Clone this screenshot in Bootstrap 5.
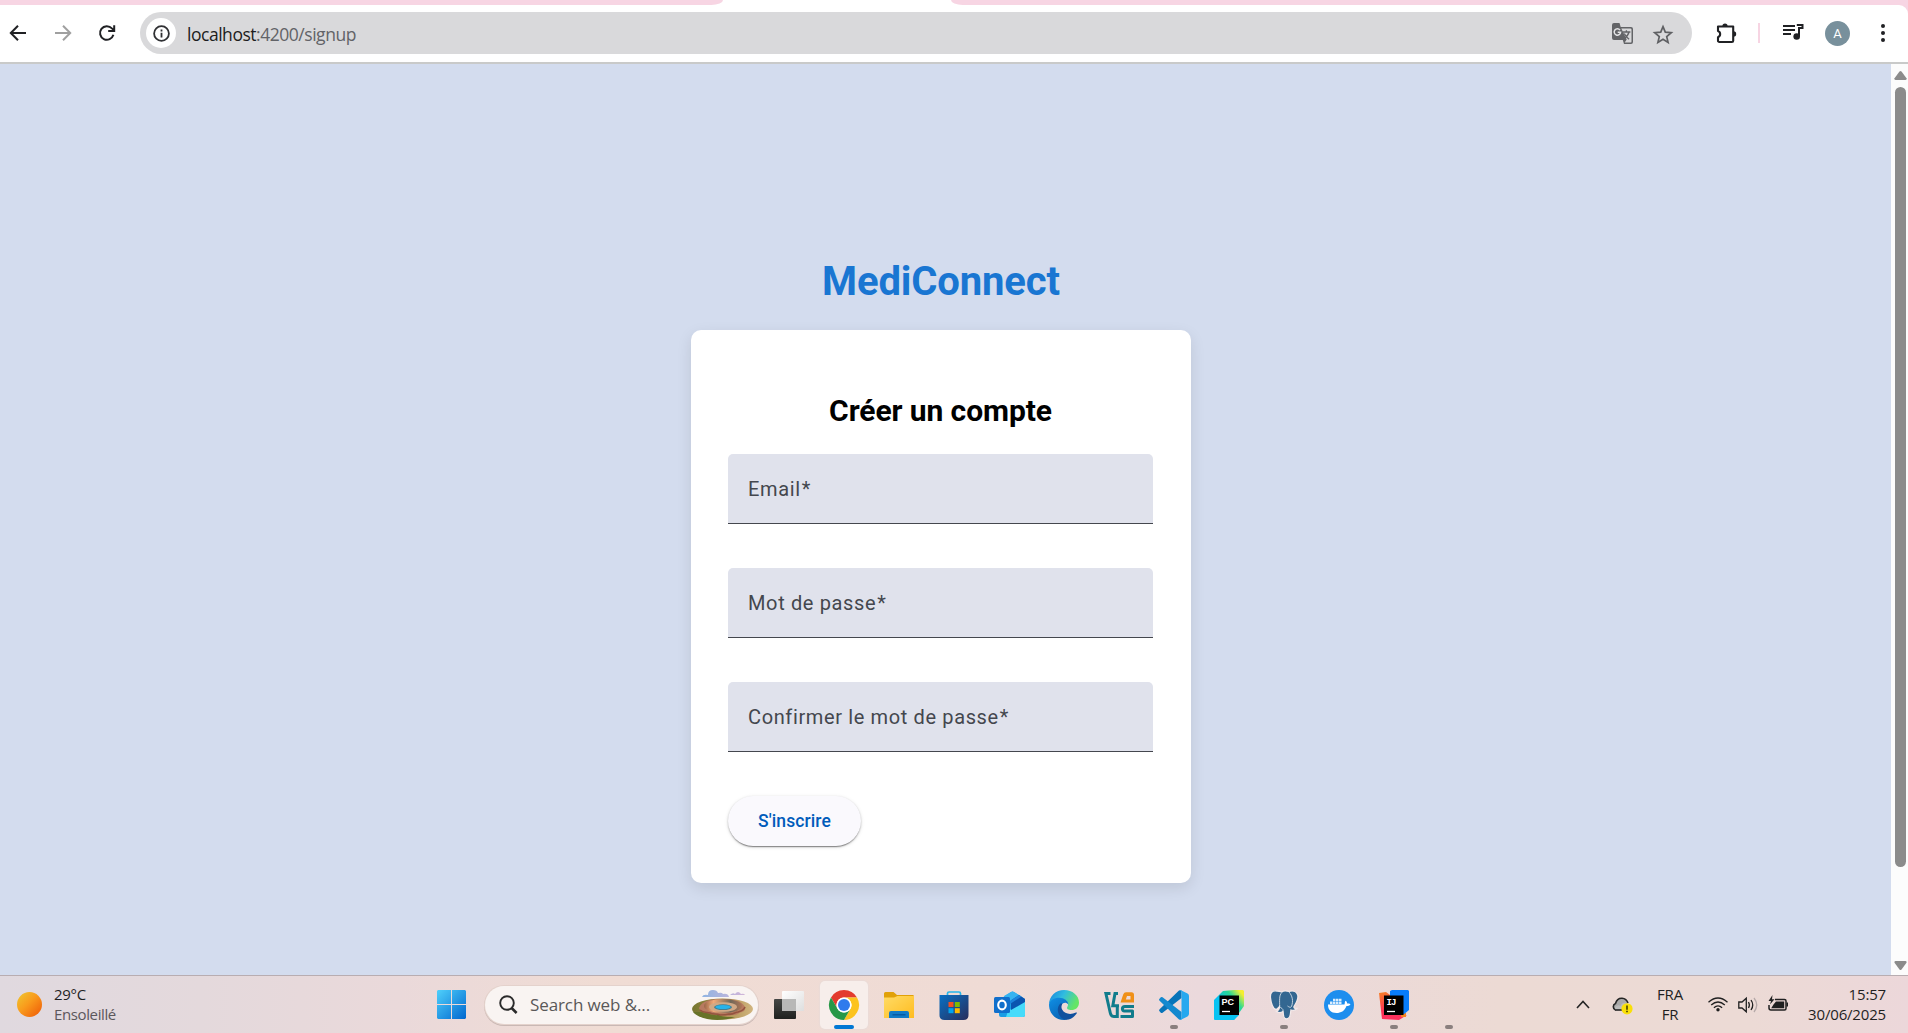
<!DOCTYPE html>
<html lang="fr">
<head>
<meta charset="utf-8">
<meta name="viewport" content="width=device-width, initial-scale=1">
<title>MediConnect</title>
<link href="https://cdn.jsdelivr.net/npm/bootstrap@5.3.0/dist/css/bootstrap.min.css" rel="stylesheet">
<style>
  body { font-family: "Open Sans", "Noto Sans", sans-serif; height: 1033px; color: #1f1f1f; }
  svg { display: block; flex: none; overflow: visible; }
  .tabstrip { height: 5px; background: #fff; }
  .strip-left { width: 723px; background: #f7d5e3; border-bottom-right-radius: 14px 6px; }
  .strip-right { width: 957px; background: #f7d5e3; border-bottom-left-radius: 14px 6px; }
  .toolbar { height: 59px; border-bottom: 2px solid #c9cac9; padding: 0 0 1px 9px; background: #fff; border-top-right-radius: 9px; }
  .toolbar-corner { background: #f7d5e3; }
  .omnibox { width: 1552px; height: 42px; background: #d9d9db; border-radius: 21px; margin-left: 24px; padding: 0 19px 0 6px; }
  .site-info { width: 30px; height: 30px; background: #fff; }
  .url-text { font-size: 17.5px; letter-spacing: -.47px; margin: 2px 0 0 11px; color: #626367; line-height: 24px; }
  .url-text b { font-weight: 400; color: #1d1d20; }
  .toolbar-sep { width: 2px; height: 20px; background: #f7d5e3; }
  .profile { width: 25px; height: 25px; background: #78909c; color: #fff; font: 13px/25px Roboto, sans-serif; }
  .viewport { height: 911px; background: #d3dcee; }
  .signup { padding-top: 193px; padding-right: 9px; font-family: Roboto, sans-serif; }
  .brand { font-size: 40px; font-weight: 700; line-height: 50px; letter-spacing: -.12px; color: #1976d2; margin: 0 0 23px; }
  .signup-card { width: 500px; height: 553px; background: #fff; border-radius: 10px; padding: 62px 38px 0 37px; box-shadow: 0 5px 15px rgba(0,0,0,.1); }
  .signup-card h2 { font-size: 30px; font-weight: 700; line-height: 38px; letter-spacing: -.08px; color: #000; margin: 0 0 24px; }
  .field { height: 70px; background: #e0e2ec; border-bottom: 1px solid #44474e; border-radius: 5px 5px 0 0; padding: 0 20px; margin-bottom: 44px; font-size: 20px; letter-spacing: .63px; color: #44474e; }
  .field span { margin-left: 1px; }
  .btn-signup { width: 133px; height: 50px; border-radius: 25px; background: #faf9fd; color: #005cbb; font: 500 17.5px/24px Roboto, sans-serif; letter-spacing: .1px; padding: 0; box-shadow: 0 2px 1px -1px rgba(0,0,0,.3), 0 1px 2px rgba(0,0,0,.24), 0 1px 4px rgba(0,0,0,.1); }
  .scroll-track { width: 17px; background: #fcfcfc; padding: 7px 2px 5px 3px; }
  .scroll-thumb { width: 11px; height: 780px; border-radius: 6px; background: #8b8b8b; margin-top: 7px; }
  .taskbar { height: 58px; border-top: 1px solid #b8adb1; background: linear-gradient(90deg, #e0d9df 0, #e4d9dc 200px, #ead9da 400px, #f0dcd4 600px, #efdbd5 1000px, #ebd9dc 1200px, #ecdad4 1500px, #ecdad5 1750px, #ecd7da 1908px); font-size: 15px; line-height: 20px; }
  .weather { width: 437px; padding-left: 17px; }
  .sun { width: 25px; height: 25px; background: linear-gradient(135deg, #efc42f 5%, #f99b1c 45%, #ef5d08 95%); }
  .weather-text { margin: -2px 0 0 12px; letter-spacing: -.3px; }
  .weather-text div + div { color: #5b575b; letter-spacing: -.38px; }
  .searchbox { width: 273px; height: 38px; margin-left: 19px; border-radius: 19px; background: #f9f4f2; box-shadow: 0 0 0 1px #e4d2cc, 0 1px 0 1px #c9b8b4; padding: 0 5px 0 14px; color: #5a5858; font-size: 17px; }
  .search-label { margin: 1px 0 0 12px; letter-spacing: -.1px; }
  .apps { margin-left: 7px; gap: 7px; }
  .app { width: 48px; height: 48px; position: relative; }
  .app.current { background: #f7eeeb; border-radius: 5px; box-shadow: 0 0 1px 1px #eadbd7; }
  .mark-run { position: absolute; bottom: 0; left: 20px; width: 8px; height: 4px; border-radius: 2px; background: #8a7f7e; }
  .current .mark-run { left: 14px; width: 20px; background: #0078d4; }
  .tray { margin-left: 103px; }
  .clock { width: 92px; margin: -2px 0 0 5px; letter-spacing: -.17px; }
  .lang { width: 40px; margin: -1px 0 0 17px; letter-spacing: -.2px; }
</style>
<script src="https://cdn.jsdelivr.net/npm/bootstrap@5.3.0/dist/js/bootstrap.bundle.min.js"></script>
</head>
<body class="d-flex flex-column overflow-hidden">

<div class="tabstrip d-flex justify-content-between"><div class="strip-left"></div><div class="strip-right"></div></div>
<div class="toolbar-corner">
<header class="toolbar d-flex align-items-center">
  <svg width="18" height="18" fill="none" stroke="#202124" stroke-width="2"><path d="M17 9H2M9 1.8 1.8 9 9 16.2"/></svg>
  <svg width="18" height="18" style="margin-left:27px" fill="none" stroke="#a0a0a0" stroke-width="2"><path d="M1 9h15M9 1.8 16.2 9 9 16.2"/></svg>
  <svg width="18" height="18" style="margin-left:26px" fill="none" stroke="#202124" stroke-width="2"><path d="M15.4 10.8A6.8 6.8 0 1 1 13.9 4.4L16 6.400M16.2 1.200V7H10.200"/></svg>
  <div class="omnibox d-flex align-items-center">
    <div class="site-info rounded-circle d-flex align-items-center justify-content-center">
      <svg width="17" height="17" fill="none" stroke="#303134" stroke-width="1.8"><circle cx="8.5" cy="8.5" r="7.4"/><path d="M8.5 7.7v4.8M8.5 4.4v2"/></svg>
    </div>
    <div class="url-text"><b>localhost</b>:4200/signup</div>
    <svg class="ms-auto" width="21" height="21" viewBox="0 0 21 21" style="margin-top:1px"><path d="M2 0h5.5l1.2 4H19a2 2 0 0 1 2 2v13a2 2 0 0 1-2 2h-7l-1.2-4H2a2 2 0 0 1-2-2V2a2 2 0 0 1 2-2z" fill="#636467"/><path d="M9.3 5.4H18.3a1.2 1.2 0 0 1 1.2 1.2v11.8a1.2 1.2 0 0 1-1.2 1.2h-5.6l2-3z" fill="#d9d9db"/><path d="M10.6 9h7.8M14.4 7.2V9M17 9c-.7 3-2.7 5.2-5 6.8M12.3 10.5c1 2.6 2.6 4.2 4.8 5.8" fill="none" stroke="#636467" stroke-width="1.3"/><path d="M8 7.1A3.2 3.2 0 1 0 8.6 9.2H5.7" fill="none" stroke="#e4e4e6" stroke-width="1.5"/></svg>
    <svg width="20" height="20" viewBox="0 0 20 20" style="margin-left:20px;margin-top:3px" fill="none" stroke="#5f6063" stroke-width="1.7"><path d="m10 1.7 2.3 5.5 6 .5-4.6 3.9 1.4 5.8-5.1-3.1-5.1 3.1 1.4-5.8-4.6-3.9 6-.5z"/></svg>
  </div>
  <svg width="21" height="21" viewBox="0 0 21 21" style="margin-left:24px"><path d="M2 3.5h15.2v14.2a1.3 1.3 0 0 1-1.3 1.3H3.3A1.3 1.3 0 0 1 2 17.700v-3.500a3.300 3.300 0 0 0 0-6.200z" fill="none" stroke="#202124" stroke-width="2.100" stroke-linejoin="round"/><path d="M6.400 3a2.600 2.600 0 0 1 5.200 0zM17.600 8.300a2.600 2.600 0 0 1 0 5.200z" fill="#202124"/></svg>
  <div class="toolbar-sep" style="margin-left:21px"></div>
  <svg width="20" height="16" viewBox="0 0 20 16" style="margin-left:23px;margin-top:-3px"><path d="M0 2h12M0 6h12M0 10h8" stroke="#202124" stroke-width="2"/><path d="M13.800 1H19.500v3h-3.500v8.200" fill="none" stroke="#202124" stroke-width="2"/><circle cx="13.700" cy="12.500" r="3.300" fill="#202124"/></svg>
  <div class="profile rounded-circle text-center" style="margin-left:22px">A</div>
  <svg width="6" height="20" style="margin-left:30px" fill="#202124"><circle cx="3" cy="3" r="2"/><circle cx="3" cy="10" r="2"/><circle cx="3" cy="17" r="2"/></svg>
</header>
</div>

<main class="viewport d-flex">
  <section class="signup flex-grow-1 d-flex flex-column align-items-center">
    <h1 class="brand">MediConnect</h1>
    <form class="signup-card">
      <h2 class="text-center">Créer un compte</h2>
      <div class="field d-flex align-items-center">Email<span>*</span></div>
      <div class="field d-flex align-items-center">Mot de passe<span>*</span></div>
      <div class="field d-flex align-items-center">Confirmer le mot de passe<span>*</span></div>
      <button type="button" class="btn-signup btn border-0">S'inscrire</button>
    </form>
  </section>
  <aside class="scroll-track d-flex flex-column align-items-center">
    <svg width="13" height="9" fill="#8b8b8b"><path d="M5.500.6Q6.500-.4 7.500.6L12.500 7.300Q13 9 11.500 9H1.500Q0 9 .5 7.300z"/></svg>
    <div class="scroll-thumb"></div>
    <svg class="mt-auto" width="13" height="9" fill="#8b8b8b"><path d="M5.500 8.400Q6.500 9.400 7.500 8.400L12.500 1.700Q13 0 11.500 0H1.500Q0 0 .5 1.700z"/></svg>
  </aside>
</main>

<footer class="taskbar d-flex align-items-center">
  <div class="weather d-flex align-items-center">
    <div class="sun rounded-circle"></div>
    <div class="weather-text"><div>29°C</div><div>Ensoleillé</div></div>
  </div>
  <svg width="29" height="29" viewBox="0 0 29 29"><defs><linearGradient id="win" gradientUnits="userSpaceOnUse" x1="0" y1="0" x2="29" y2="29"><stop stop-color="#4fd0fb"/><stop offset="1" stop-color="#0067cf"/></linearGradient></defs><path fill="url(#win)" d="M1 0h13v14H0V1zM15 0h13l1 1v13H15zM0 15h14v14H1l-1-1zM15 15h14v13l-1 1H15z"/></svg>
  <div class="searchbox d-flex align-items-center">
    <svg width="19" height="19" viewBox="0 0 19 19" fill="none" stroke="#2a2a2a"><circle cx="8" cy="8" r="6.800" stroke-width="1.900"/><path d="m12.600 13 5 5" stroke-width="2.500"/></svg>
    <span class="search-label">Search web &amp;...</span>
    <svg class="ms-auto" width="61" height="30" viewBox="0 0 61 30">
      <defs><linearGradient id="land"><stop stop-color="#75752e"/><stop offset=".5" stop-color="#a98c4d"/><stop offset="1" stop-color="#d1b57f"/></linearGradient><linearGradient id="sky"><stop stop-color="#90b4e2"/><stop offset="1" stop-color="#d2b5d8"/></linearGradient><linearGradient id="rim"><stop stop-color="#9b6648"/><stop offset=".25" stop-color="#f2aa79"/><stop offset=".7" stop-color="#706858"/><stop offset="1" stop-color="#ad7656"/></linearGradient></defs>
      <ellipse cx="30.500" cy="19" rx="30.500" ry="10.500" fill="url(#land)"/>
      <path d="M1 22c8 9 29 10 42 5-9 0-12 0-16-2-8 1-12-3-18-3z" fill="#687329"/>
      <path d="M7 18c3-8 13-9 24-9s19 2 22 8c1 4-3 5-6 6-3 3-7 1-10 3-4 0-6-1-9-1-4 0-6-2-10-2-5 0-10-1-11-5z" fill="#b87a60"/>
      <path d="M8 20c3 3 7 2 10 3 3 2 6 0 10 2 4 0 6 0 9-1 4 1 6-2 9-2 4-1 6-2 7-5" fill="none" stroke="#94543f" stroke-width="1.600"/>
      <ellipse cx="31" cy="16" rx="19" ry="7" fill="url(#rim)"/><ellipse cx="31" cy="17" rx="14" ry="4.800" fill="#d0a986"/><ellipse cx="31" cy="17.200" rx="9" ry="2.900" fill="#427f92"/><ellipse cx="31" cy="17" rx="7.600" ry="2.100" fill="#28b3e9"/>
      <path d="M10 7q1-3 6-2 0-5 5-5 4 0 5 3 4-1 5 1 5-1 6 3zM38 5q3-3 5-1 3-4 6 0 3-1 4 1z" fill="url(#sky)"/>
    </svg>
  </div>

  <nav class="apps d-flex">
    <div class="app d-flex align-items-center justify-content-center">
      <svg width="30" height="28" viewBox="0 0 30 28"><defs><linearGradient id="tvd" x2="0" y2="1"><stop stop-color="#454745"/><stop offset="1" stop-color="#20211f"/></linearGradient><linearGradient id="tvl" x2="1" y2="1"><stop stop-color="#fff"/><stop offset="1" stop-color="#dedede"/></linearGradient></defs><rect y="8" width="22" height="20" rx="1" fill="url(#tvd)"/><rect x="8" width="22" height="20" rx="1" fill="url(#tvl)"/><path d="M8 8h14v12H8z" fill="#b8b8b7"/></svg>
    </div>
    <div class="app current d-flex align-items-center justify-content-center">
      <svg width="30" height="30" viewBox="0 0 48 48"><circle cx="24" cy="24" r="14" fill="#fff"/><path d="M24 12H44.800A24 24 0 0 0 3.200 12L13.600 30A12 12 0 0 1 24 12z" fill="#e33b2e"/><path d="M34.400 30 24 48A24 24 0 0 0 44.800 12H24A12 12 0 0 1 34.400 30z" fill="#fcc31e"/><path d="M13.600 30 3.200 12A24 24 0 0 0 24 48L34.400 30A12 12 0 0 1 13.600 30z" fill="#279847"/><circle cx="24" cy="24" r="12" fill="#fff"/><circle cx="24" cy="24" r="9.600" fill="#2f7bed"/></svg><i class="mark-run"></i>
    </div>
    <div class="app d-flex align-items-center justify-content-center">
      <svg width="30" height="26" viewBox="0 0 30 26"><defs><linearGradient id="fold" x2="1" y2="1"><stop stop-color="#ffdb65"/><stop offset="1" stop-color="#ffbc20"/></linearGradient></defs><path d="M0 1.500Q0 0 1.500 0H9.500L13 3H29Q30 3 30 4.500V8H0z" fill="#e1a108"/><path d="M0 5.500H10L13.500 4H30V26H0z" fill="url(#fold)"/><path d="M5 26V21q0-2 2-2H23q2 0 2 2V26z" fill="#137bc7"/><path d="M8.500 22.800H21.500" stroke="#07569e" stroke-width="1.300"/></svg>
    </div>
    <div class="app d-flex align-items-center justify-content-center">
      <svg width="30" height="30" viewBox="0 0 30 30"><defs><linearGradient id="store" x2="1" y2="1"><stop stop-color="#0870c4"/><stop offset="1" stop-color="#292d5b"/></linearGradient></defs><path d="M8.500 6V3.500Q8.500 2 10 2H20Q21.500 2 21.500 3.500V6" fill="none" stroke="#25b5ea" stroke-width="1.700"/><path d="M.5 5H29.500V25Q29.500 30 24.500 30H5.500Q.5 30 .5 25z" fill="url(#store)"/><path d="M9.500 12h5v5h-5z" fill="#f25022"/><path d="M15.800 12h5v5h-5z" fill="#7fba00"/><path d="M9.500 18.200h5v5h-5z" fill="#00a4ef"/><path d="M15.800 18.200h5v5h-5z" fill="#ffb900"/></svg>
    </div>
    <div class="app d-flex align-items-center justify-content-center">
      <svg width="31" height="27" viewBox="0 0 31 27"><path d="M5 9 17 1Q18.500 0 20 1L31 8V24Q31 26 29 26H7Q5 26 5 24z" fill="#199de5"/><path d="M10 5 17 1Q18.500 0 20 1L25 4 14 11z" fill="#35b3f0"/><path d="M31 10V24Q31 26 29 26H12L14 20z" fill="#46dbfa"/><path d="m25 4 6 4V11L17 19V9.500z" fill="#0a55b0"/><path d="M16 10 25 4 27.500 5.600 16 13z" fill="#1b83dc"/><rect y="6" width="16" height="16" rx="1.500" fill="#106fcc"/><ellipse cx="8" cy="14" rx="3.800" ry="4.400" fill="none" stroke="#fff" stroke-width="2.100"/></svg>
    </div>
    <div class="app d-flex align-items-center justify-content-center">
      <svg width="30" height="30" viewBox="0 0 30 30"><defs><linearGradient id="edg" x1="0" x2="1" y2=".4"><stop stop-color="#1682dc"/><stop offset=".5" stop-color="#30bce0"/><stop offset="1" stop-color="#64e565"/></linearGradient><linearGradient id="edb" x2=".6" y2="1"><stop stop-color="#1090e6"/><stop offset="1" stop-color="#0862b4"/></linearGradient></defs><path d="M0 14.500C0 6 7 0 15 0c8.500 0 15 5.500 15 12.500 0 5-3.500 7.500-7.500 7.500-3.500 0-5-1.500-4.300-2.800 2-2.800.6-8.200-5.700-8.200C6 9 1 11.500 0 14.500z" fill="url(#edg)"/><path d="M0 14.500C1 10.500 5 7.800 10 7.800c5.500 0 9.500 3.200 9.300 6.700-2-2.600-5.300-2-6.800.3-3 5 .5 12.200 8.500 11.500C18.700 30 16 30 15 30 6 30 0 23 0 14.500z" fill="url(#edb)"/><path d="M11.300 13.500C6 19 9.500 29 17.500 29.800c4 0 8-2.800 10.300-6.500.3-.7-.1-1-.8-.7-5.500 2.600-11.500 1.500-13.900-3-1-2-.8-4 .3-6z" fill="#10509e"/></svg>
    </div>
    <div class="app d-flex align-items-center justify-content-center">
      <svg width="30" height="26" viewBox="0 0 30 26" fill="none" stroke="#117c8c" stroke-width="3"><path d="M14 1.600H11L8.800 13.800H15M6.500 1.600H1.900L6.300 21Q7 24.400 9.800 24.400H13.300V14"/><path d="M30 14.500H21Q18.400 14.500 18.400 16.800T20.500 19H28.500V24.400H16.500" stroke-linejoin="round"/><path fill-rule="evenodd" stroke="none" d="M16.500 10.500 19.200 2.500Q20 .3 22 .3H27.500Q30 .3 30 2.800V10.500zM21.800 7.600H26.500V4H23z" fill="#f09018"/></svg>
    </div>
    <div class="app d-flex align-items-center justify-content-center">
      <svg width="30" height="30" viewBox="0 0 100 100"><path d="M75 27 12 76Q9 78 6 76L1 70Q-1 67 2 64L64 4Q69-1 75 2z" fill="#0874b9"/><path d="M75 73 12 24Q9 22 6 24L1 30Q-1 33 2 36L64 96Q69 101 75 98z" fill="#1489cf"/><path d="M73 1 95 12Q100 15 100 20V80Q100 85 95 88L73 99Q68 100 65 97 75 99 75 92V8Q75 1 65 3 68 0 73 1z" fill="#27a8ef"/></svg><i class="mark-run"></i>
    </div>
    <div class="app d-flex align-items-center justify-content-center">
      <svg width="30" height="30" viewBox="0 0 30 30"><defs><linearGradient id="pyc" x1="0" y1=".8" x2="1" y2="0"><stop offset=".3" stop-color="#07bff4"/><stop offset=".65" stop-color="#28d895"/><stop offset=".9" stop-color="#f4ee31"/></linearGradient></defs><path d="M9 1 20 0H29L30 1V16L20 30H1L0 29V10z" fill="url(#pyc)"/><path d="M0 11 6 5V25H25L20 30H1L0 29z" fill="#07c3f2"/><path d="M5.500 5.500H25V25H5.500z" fill="#000"/><path d="M8 21.500h8" stroke="#fff" stroke-width="1.300"/><text x="7.500" y="15" font-family="Liberation Sans" font-size="9" font-weight="700" fill="#fff">PC</text></svg>
    </div>
    <div class="app d-flex align-items-center justify-content-center">
      <svg width="28" height="30" viewBox="0 0 28 30"><path d="M7 1C2 0 0 3 .5 8c.5 5 2.500 11 5.500 11.500 1.500 0 2.500-2 3.500-3 0 2-1 4-3 5 2 1.500 5 1 6.500 0 .8 3-.5 7.500 3.500 7.500 5-.5 3.500-6 4.500-9 2 1 5 0 6-1.500-2 0-3.500-.5-3-2 2.500-4 5-9 3.500-12C26 1 22 .5 19 1.500 16 .5 13 1 11.500 2 10 1.200 8.500 1 7 1z" fill="#336791" stroke="#f3e9e9" stroke-width="1.300"/><path d="M12 2.500C8.500 5 10 12 9.500 16.500c1.500 2 4 1.500 3.500 5M19 2c3.500 4 4.500 9 2.500 14.500-1 1.500-2.500.5-4-.5" fill="none" stroke="#e4eaf0" stroke-width=".8"/></svg><i class="mark-run"></i>
    </div>
    <div class="app d-flex align-items-center justify-content-center">
      <svg width="30" height="30" viewBox="0 0 30 30"><circle cx="15" cy="15" r="15" fill="#1d8eee"/><path d="M4 14.500H20.500C21 13 20.500 12 21.500 10.800 22.800 11.500 23 12.700 23.200 13.500 24.500 13.300 26 13.500 26.500 14.200 25.500 15.800 24 16 22.500 16 20.500 21 17 23 12.500 23 7 23 4 20 4 14.500z" fill="#fff"/><path d="M6 11.500h2.500V14H6zM9 11.500h2.500V14H9zM12 11.500h2.500V14H12zM15 11.500h2.500V14H15zM9 8.700h2.500v2.400H9zM12 8.700h2.500v2.400H12zM15 8.700h2.500v2.400H15z" fill="#fff" fill-opacity=".85"/></svg>
    </div>
    <div class="app d-flex align-items-center justify-content-center">
      <svg width="30" height="30" viewBox="0 0 30 30"><defs><linearGradient id="ij" x2=".3" y2="1"><stop stop-color="#f58326"/><stop offset=".7" stop-color="#fd3055"/></linearGradient></defs><path d="M15 23H27V26L25 27H15z" fill="#f48320"/><path d="M0 3 7 2 15 8 20 29H3Z" fill="url(#ij)"/><path d="M11 1 13 0H29L30 1V20L24 25 11 8z" fill="#087cfa"/><path d="M18 25H28L20 30 3 29 5 24z" fill="#fe315d"/><path d="M22 24h5v3h-5z" fill="#f88420"/><path d="M5 5.500H24.500V25H5z" fill="#000"/><path d="M8 21.500h8" stroke="#fff" stroke-width="1.300"/><text x="7.500" y="15" font-family="Liberation Mono" font-size="9" font-weight="700" letter-spacing="-.8" fill="#fff">IJ</text></svg><i class="mark-run"></i>
    </div>
    <div class="app"><i class="mark-run"></i></div>
  </nav>

  <div class="tray d-flex align-items-center">
    <svg width="14" height="9" fill="none" stroke="#252525" stroke-width="1.600"><path d="m1 8 6-6.500L13 8"/></svg>
    <svg width="21" height="17" viewBox="0 0 21 17" style="margin-left:22px;margin-top:1px"><path d="M3.500 13A3.500 3.500 0 0 1 3.500 6.500Q5 1 10 1.200 14.500 1.500 16 6" fill="#aaa" stroke="#252525" stroke-width="1.600"/><path d="M3.500 13H10l5-7Q10 5 8.500 9 6 7 3 10z" fill="#bbb"/><path d="M3 13H11" stroke="#252525" stroke-width="1.600"/><circle cx="15" cy="11.800" r="5.600" fill="#f9df08"/><path d="M15 8.500v4.200M15 13.800v1.500" stroke="#282500" stroke-width="1.400"/></svg>
    <div class="lang text-center"><div>FRA</div><div>FR</div></div>
    <svg width="20" height="15" viewBox="0 0 20 15" style="margin-left:18px" fill="none" stroke="#202020" stroke-width="1.300"><path d="M.5 5.200Q10-3.200 19.500 5.200M3.200 8Q10 2 16.800 8M5.900 10.700Q10 7 14.100 10.700"/><circle cx="10" cy="12.700" r="1.700" fill="#202020" stroke="none"/></svg>
    <svg width="20" height="16" viewBox="0 0 20 16" style="margin-left:10px" fill="none" stroke="#202020" stroke-width="1.300"><path d="M.8 5H4L8.300 1.200V14.800L4 11H.8z"/><path d="M10.500 5Q12.200 8 10.500 11M13 3Q16.500 8 13 13"/><path d="M16 1Q21.500 8 16 15" stroke="#b5a9a8"/></svg>
    <svg width="21" height="17" viewBox="0 0 21 17" style="margin-left:10px;margin-top:-2px"><path d="M7 4.500H16.500Q18 4.500 18 6V13.500Q18 15 16.500 15H3Q1 15 1 13V10" fill="none" stroke="#202020" stroke-width="1.500"/><path d="M8 6.500H16.200V13.200H3.200L5.500 9.500zM18.500 7.500h1.500v4h-1.500zM4.500 0 .5 6H3L2 9.500 6.500 4.200H4z" fill="#202020"/></svg>
    <div class="clock text-end"><div>15:57</div><div>30/06/2025</div></div>
  </div>
</footer>
</body>
</html>
